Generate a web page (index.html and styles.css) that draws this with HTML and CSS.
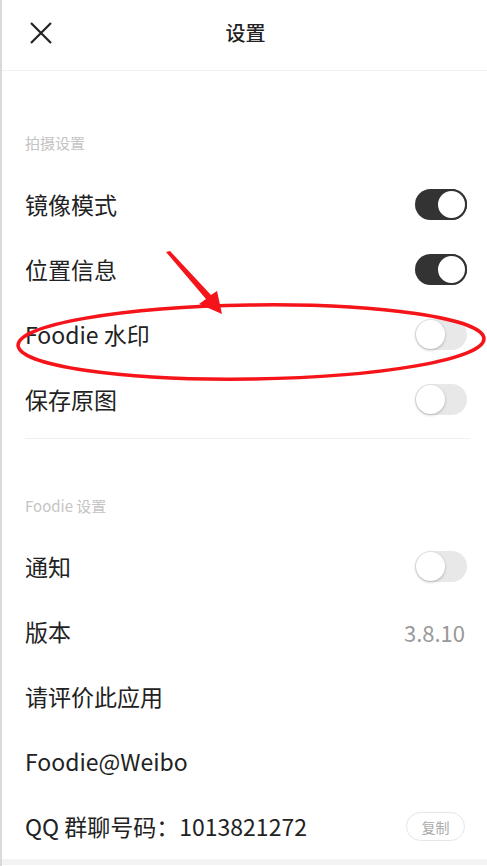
FILE: index.html
```html
<!DOCTYPE html>
<html lang="zh">
<head>
<meta charset="utf-8">
<title>设置</title>
<link rel="stylesheet" href="styles.css">
</head>
<body>
<div class="page">
  <header class="topbar">
    <span class="close">
      <svg width="22" height="22" viewBox="0 0 22 22"><path d="M1 1 L21 21 M21 1 L1 21" stroke="#222" stroke-width="2.2" fill="none"/></svg>
    </span>
    <h1 class="title">设置</h1>
  </header>

  <section class="group">
    <div class="group-label first">拍摄设置</div>
    <div class="row"><span class="row-text">镜像模式</span><span class="toggle on"><span class="knob"></span></span></div>
    <div class="row"><span class="row-text">位置信息</span><span class="toggle on"><span class="knob"></span></span></div>
    <div class="row"><span class="row-text">Foodie 水印</span><span class="toggle"><span class="knob"></span></span></div>
    <div class="row"><span class="row-text">保存原图</span><span class="toggle"><span class="knob"></span></span></div>
  </section>
  <div class="divider"></div>

  <section class="group">
    <div class="group-label">Foodie 设置</div>
    <div class="row"><span class="row-text">通知</span><span class="toggle"><span class="knob"></span></span></div>
    <div class="row"><span class="row-text">版本</span><span class="value">3.8.10</span></div>
    <div class="row"><span class="row-text">请评价此应用</span></div>
    <div class="row"><span class="row-text">Foodie@Weibo</span></div>
    <div class="row"><span class="row-text">QQ 群聊号码：1013821272</span><span class="copy">复制</span></div>
  </section>
  <div class="bottom"></div>

  <svg class="annot" width="487" height="866" viewBox="0 0 487 866">
    <ellipse cx="251" cy="342" rx="233" ry="37" transform="rotate(-0.8 251 342)" fill="none" stroke="#f5141a" stroke-width="3.5"/>
    <polygon points="166,252 170,251 211,295 217,291 222,314 199,304 206,299" fill="#f5141a"/>
  </svg>
</div>
</body>
</html>
```

FILE: styles.css
```css
html, body {
  margin: 0;
  padding: 0;
  background: #fff;
}
body {
  font-family: "Noto Sans CJK SC", "Noto Sans", sans-serif;
  color: #222;
}
.page {
  position: relative;
  width: 487px;
  height: 866px;
  overflow: hidden;
  box-sizing: border-box;
  border-left: 2px solid #d9d9d9;
}
.topbar {
  height: 71px;
  border-bottom: 1px solid #f2f2f2;
  display: flex;
  align-items: center;
  justify-content: center;
  position: relative;
  box-sizing: border-box;
}
.close {
  position: absolute;
  left: 28px;
  top: 22px;
  width: 22px;
  height: 22px;
}
.close svg { display: block; }
.title {
  margin: 0;
  font-size: 20px;
  font-weight: 500;
  line-height: 1;
  margin-top: -5px;
  margin-left: 2px;
}
.group {
  display: flex;
  flex-direction: column;
}
.group-label {
  padding: 57px 0 18px 23px;
  font-size: 15px;
  line-height: 20px;
  color: #c4c4c4;
}
.group-label.first {
  padding-top: 62px;
  padding-bottom: 19px;
}
.row {
  height: 65px;
  display: flex;
  align-items: center;
  justify-content: space-between;
  padding: 0 20px 0 23px;
}
.row-text {
  font-size: 23px;
  line-height: 1;
  color: #222;
}
.value {
  font-size: 22px;
  color: #999;
  margin-right: 2px;
}
.toggle {
  width: 52px;
  height: 31px;
  border-radius: 16px;
  background: #e8e8e8;
  position: relative;
  box-sizing: border-box;
}
.toggle .knob {
  position: absolute;
  top: 1px;
  left: 1px;
  width: 29px;
  height: 29px;
  border-radius: 50%;
  background: #fff;
  box-shadow: 0 1px 3px rgba(0,0,0,0.25);
  box-sizing: border-box;
}
.toggle.on {
  background: #333;
}
.toggle.on .knob {
  left: auto;
  right: 0;
  top: 0;
  width: 31px;
  height: 31px;
  border: 2px solid #333;
  box-shadow: none;
}
.divider {
  height: 1px;
  background: #f0f0f0;
  margin: 6px 17px 0 23px;
}
.copy {
  width: 59px;
  height: 29px;
  box-sizing: border-box;
  border: 1.5px solid #e6e6e6;
  border-radius: 15px;
  display: flex;
  align-items: center;
  justify-content: center;
  font-size: 14px;
  color: #aaa;
  margin-right: 2px;
}
.bottom {
  height: 6px;
  background: #f3f3f3;
}
.annot {
  position: absolute;
  left: -2px;
  top: 0;
  pointer-events: none;
}
```
